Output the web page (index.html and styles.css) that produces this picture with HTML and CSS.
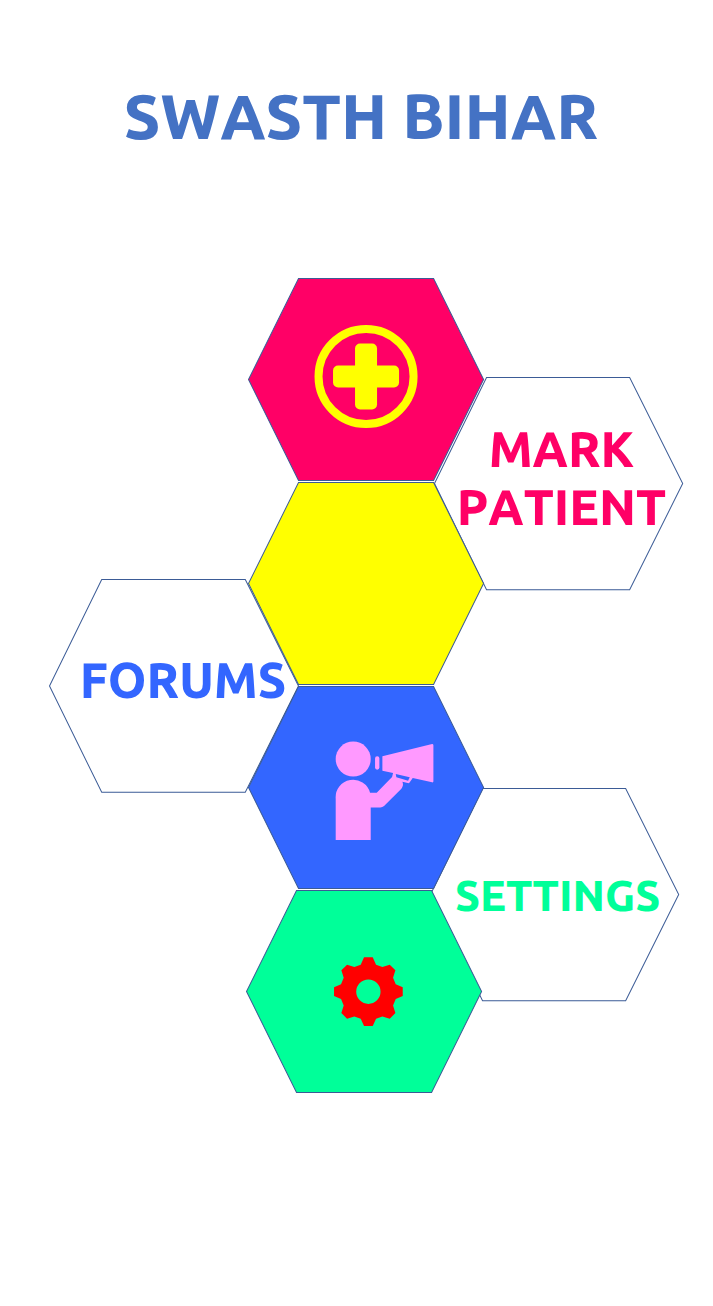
FILE: index.html
```html
<!DOCTYPE html>
<html lang="en">
<head>
<meta charset="utf-8">
<meta name="viewport" content="width=device-width, initial-scale=1">
<title>Swasth Bihar</title>
<link rel="stylesheet" href="styles.css">
</head>
<body>
<main class="page">
  <h1 class="title">SWASTH BIHAR</h1>
  <nav class="honeycomb">
    <div class="column column-left">
      <a class="cell cell-forums" href="#forums">
        <svg class="hex" viewBox="0 0 249 213" aria-hidden="true"><polygon points="0.5,106.5 52.5,0.5 195.5,0.5 248.5,106.5 195.5,212.5 52.5,212.5"/></svg>
        <span class="label">FORUMS</span>
      </a>
    </div>
    <div class="column column-right">
      <a class="cell cell-patient" href="#patient">
        <svg class="hex" viewBox="0 0 249 213" aria-hidden="true"><polygon points="0.5,106.5 52.5,0.5 195.5,0.5 248.5,106.5 195.5,212.5 52.5,212.5"/></svg>
        <span class="label">MARK<br>PATIENT</span>
      </a>
      <a class="cell cell-settings" href="#settings">
        <svg class="hex" viewBox="0 0 249 213" aria-hidden="true"><polygon points="0.5,106.5 52.5,0.5 195.5,0.5 248.5,106.5 195.5,212.5 52.5,212.5"/></svg>
        <span class="label">SETTINGS</span>
      </a>
    </div>
    <div class="column column-center">
      <a class="tile" href="#patient" aria-label="Mark patient">
        <svg class="hex hex-pink" viewBox="0 0 236 203" aria-hidden="true">
          <polygon points="0.5,101.5 50.5,0.5 185.5,0.5 235.5,101.5 185.5,202.5 50.5,202.5"/>
          <circle class="ring" cx="118" cy="98.5" r="47.5"/>
          <rect class="cross" x="85" y="87.5" width="66" height="22" rx="5"/>
          <rect class="cross" x="107" y="65.5" width="22" height="66" rx="5"/>
        </svg>
      </a>
      <div class="tile">
        <svg class="hex hex-yellow" viewBox="0 0 236 203" aria-hidden="true"><polygon points="0.5,101.5 50.5,0.5 185.5,0.5 235.5,101.5 185.5,202.5 50.5,202.5"/></svg>
      </div>
      <a class="tile" href="#forums" aria-label="Forums">
        <svg class="hex hex-blue" viewBox="0 0 236 203" aria-hidden="true">
          <polygon points="0.5,101.5 50.5,0.5 185.5,0.5 235.5,101.5 185.5,202.5 50.5,202.5"/>
          <svg x="72" y="44" width="130" height="120" viewBox="0 0 390 360">
            <g class="speaker">
              <circle cx="99.500" cy="87" r="52.500"/>
              <path d="M47 330V206a52.500 52.500 0 0 1 103-18H170L216 141 219 129 187 122V79L336 42Q340 42 340 46V154Q340 158 336 157L278 144 268 158Q266 160 263 159L247 155Q250 162 248 168 247 172 244 176L192 228Q187 232 181 232H152V330Z"/>
              <rect x="165" y="79" width="13" height="40" rx="6.500"/>
            </g>
            <path class="handle" d="M227 132L269 142 264 152 229 142Z"/>
          </svg>
        </svg>
      </a>
      <a class="tile tile-start" href="#settings" aria-label="Settings">
        <svg class="hex hex-green" viewBox="0 0 236 203" aria-hidden="true">
          <polygon points="0.5,101.5 50.5,0.5 185.5,0.5 235.5,101.5 185.5,202.5 50.5,202.5"/>
          <svg x="74" y="55" width="100" height="95" viewBox="0 0 300 285">
            <path class="gear" fill-rule="evenodd" d="M132 37H158L168 59 187 66 209 59 226 76 219 98 227 118 248 127V153L227 162 219 181 226 204 209 221 187 214 168 221 158 243H132L122 221 103 214 81 221 64 204 71 181 63 162 42 153V127L63 118 71 98 64 76 81 59 103 66 122 59ZM145 103.500A36.500 36.500 0 1 0 145 176.500A36.500 36.500 0 1 0 145 103.500Z"/>
          </svg>
        </svg>
      </a>
    </div>
  </nav>
</main>
</body>
</html>
```
FILE: styles.css
```css
* {
  box-sizing: border-box;
}

body {
  margin: 0;
  background: #fff;
  font-family: Ubuntu, Lato, sans-serif;
  font-weight: 900;
  font-kerning: none;
}

.page {
  padding: 76px 30px 213px 39px;
}

.title {
  margin: 0 0 122px;
  color: #4472c4;
  font-size: 63px;
  font-weight: 900;
  line-height: 80px;
  text-align: center;
  white-space: nowrap;
}

.honeycomb {
  display: grid;
  grid-template-columns: 197fr 53fr 131fr 54fr 199fr;
  align-items: start;
  max-width: 634px;
  margin-left: auto;
}

.column {
  display: flex;
  flex-direction: column;
  grid-row: 1;
  min-width: 0;
}

.column-left {
  grid-column: 1 / 3;
  padding-top: 120.5%;
}

.column-right {
  grid-column: 4 / 6;
  padding-top: 39%;
}

.column-center {
  grid-column: 2 / 5;
  gap: 1px;
  pointer-events: none;
}

.cell {
  display: grid;
  align-items: center;
  justify-items: center;
  text-decoration: none;
}

.cell > * {
  grid-area: 1 / 1;
}

.column-right .cell {
  width: 98.5%;
}

.cell-forums {
  color: #3366ff;
}

.cell-patient {
  align-self: flex-end;
  color: #ff0066;
}

.cell-settings {
  margin-top: 78.5%;
  color: #00ff99;
}

.label {
  font-size: 49px;
  line-height: 58px;
  text-align: center;
  padding: 0 0 10px 6px;
}

.cell-forums .label {
  padding: 0 0 12px 18px;
}

.cell-settings .label {
  font-size: 43px;
  padding-bottom: 0;
}

.tile {
  display: block;
  width: 99.2%;
  align-self: flex-end;
}

.tile-start {
  align-self: flex-start;
}

.hex {
  display: block;
  width: 100%;
  overflow: visible;
  fill: none;
}

.hex polygon {
  stroke: #3b5b96;
  stroke-width: 1;
  pointer-events: auto;
}

.hex-pink polygon {
  fill: #ff0066;
}

.hex-yellow polygon {
  fill: #ffff00;
}

.hex-blue polygon {
  fill: #3366ff;
}

.hex-green polygon {
  fill: #00ff99;
}

.ring {
  stroke: #ffff00;
  stroke-width: 8;
}

.cross {
  fill: #ffff00;
}

.speaker {
  fill: #ff99ff;
}

.handle {
  fill: #3366ff;
}

.gear {
  fill: #ff0000;
}
```
